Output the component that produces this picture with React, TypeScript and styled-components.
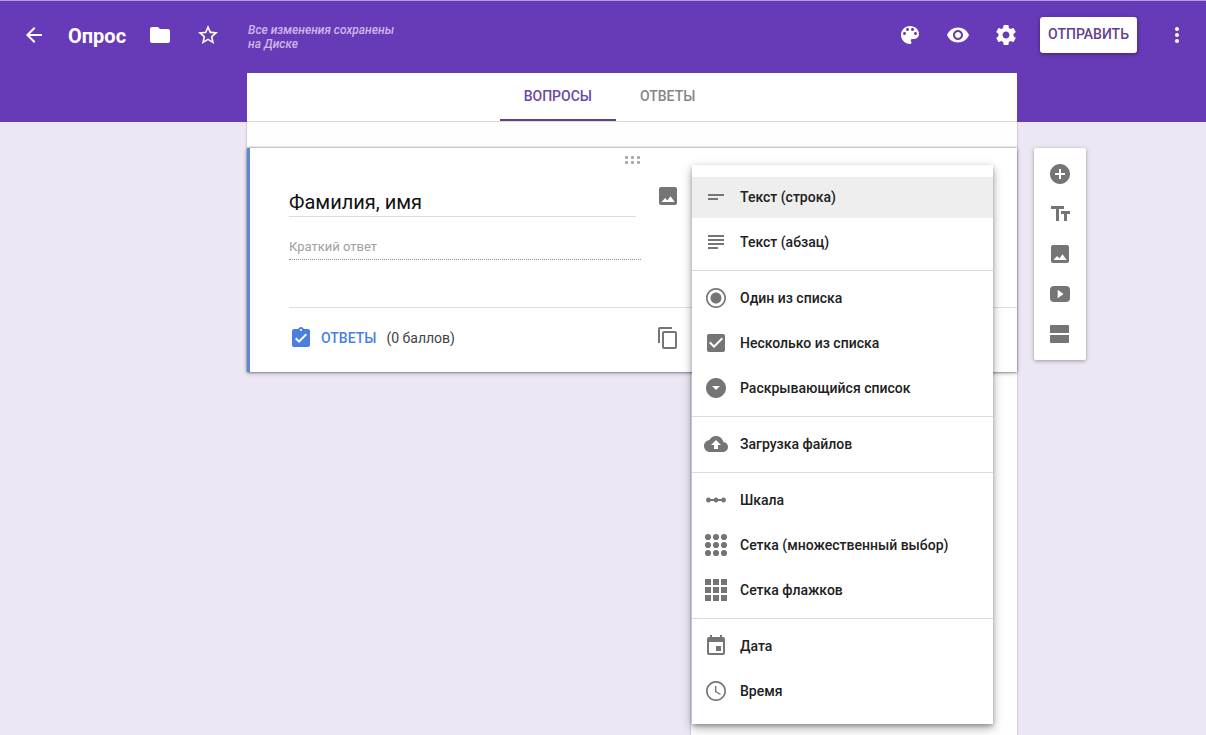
import React from "react";
import styled, { createGlobalStyle, css } from "styled-components";

const color = {
  purple: "#673ab7",
  purpleDark: "#5f4190",
  page: "#ede7f4",
  icon: "#757575",
  blue: "#4a7fe0",
  line: "#dcdcdc",
};

const GlobalStyle = createGlobalStyle`
  * { box-sizing: border-box; }
  body { margin: 0; background: ${color.page}; font-family: Roboto, "Noto Sans", sans-serif; }
  button, input { font-family: inherit; }
`;

const paths: Record<string, React.ReactNode> = {
  back: <path d="M20 11H7.83l5.59-5.59L12 4l-8 8 8 8 1.41-1.41L7.83 13H20v-2z" />,
  folder: <path d="M10 4H4c-1.1 0-1.99.9-1.99 2L2 18c0 1.1.9 2 2 2h16c1.1 0 2-.9 2-2V8c0-1.1-.9-2-2-2h-8l-2-2z" />,
  star: <path d="M22 9.24l-7.19-.62L12 2 9.19 8.63 2 9.24l5.46 4.73L5.82 21 12 17.27 18.18 21l-1.63-7.03L22 9.24zM12 15.4l-3.76 2.27 1-4.28-3.32-2.88 4.38-.38L12 6.1l1.71 4.04 4.38.38-3.32 2.88 1 4.28L12 15.4z" />,
  palette: <path d="M12 3c-4.97 0-9 4.03-9 9s4.03 9 9 9c.83 0 1.5-.67 1.5-1.5 0-.39-.15-.74-.39-1.01-.23-.26-.38-.61-.38-.99 0-.83.67-1.5 1.5-1.5H16c2.76 0 5-2.24 5-5 0-4.42-4.03-8-9-8zm-5.500 9c-.83 0-1.500-.67-1.500-1.500S5.670 9 6.500 9 8 9.670 8 10.500 7.330 12 6.500 12zm3-4C8.670 8 8 7.330 8 6.500S8.670 5 9.500 5s1.500.67 1.500 1.500S10.330 8 9.500 8zm5 0c-.83 0-1.500-.67-1.500-1.500S13.670 5 14.500 5s1.500.67 1.500 1.500S15.330 8 14.500 8zm3 4c-.83 0-1.500-.67-1.500-1.500S16.670 9 17.500 9s1.500.67 1.500 1.500-.67 1.500-1.500 1.500z" />,
  eye: <path d="M12 4.500C7 4.500 2.730 7.610 1 12c1.730 4.390 6 7.500 11 7.500s9.270-3.110 11-7.500c-1.730-4.390-6-7.500-11-7.500zM12 17c-2.760 0-5-2.240-5-5s2.240-5 5-5 5 2.240 5 5-2.240 5-5 5zm0-8c-1.660 0-3 1.340-3 3s1.340 3 3 3 3-1.340 3-3-1.340-3-3-3z" />,
  gear: <path d="M19.430 12.980c.04-.32.07-.64.07-.98s-.03-.66-.07-.98l2.110-1.650c.19-.15.24-.42.12-.64l-2-3.460c-.12-.22-.39-.3-.61-.22l-2.490 1c-.52-.4-1.080-.73-1.690-.98l-.38-2.650C14.460 2.180 14.250 2 14 2h-4c-.25 0-.46.18-.49.42l-.38 2.650c-.61.25-1.170.59-1.690.98l-2.490-1c-.23-.09-.49 0-.61.22l-2 3.460c-.13.22-.07.49.12.64l2.110 1.650c-.04.32-.07.65-.07.98s.03.66.07.98l-2.110 1.650c-.19.15-.24.42-.12.64l2 3.460c.12.22.39.3.61.22l2.490-1c.52.4 1.080.73 1.690.98l.38 2.650c.03.24.24.42.49.42h4c.25 0 .46-.18.49-.42l.38-2.650c.61-.25 1.170-.59 1.690-.98l2.490 1c.23.09.49 0 .61-.22l2-3.460c.12-.22.07-.49-.12-.64l-2.110-1.650zM12 15.500c-1.930 0-3.500-1.570-3.500-3.500s1.570-3.500 3.500-3.500 3.500 1.570 3.500 3.500-1.570 3.500-3.500 3.500z" />,
  more: <path d="M12 8c1.100 0 2-.9 2-2s-.9-2-2-2-2 .9-2 2 .9 2 2 2zm0 2c-1.100 0-2 .9-2 2s.9 2 2 2 2-.9 2-2-.9-2-2-2zm0 6c-1.100 0-2 .9-2 2s.9 2 2 2 2-.9 2-2-.9-2-2-2z" />,
  image: <path fillRule="evenodd" d="M5 3h14a2 2 0 0 1 2 2v14a2 2 0 0 1-2 2H5a2 2 0 0 1-2-2V5a2 2 0 0 1 2-2zM5.500 18h13.200l-4.200-5.700-3.100 4.100-2.300-2.500z" />,
  copy: <path d="M16 1H4c-1.100 0-2 .9-2 2v14h2V3h12V1zm3 4H8c-1.100 0-2 .9-2 2v14c0 1.100.9 2 2 2h11c1.100 0 2-.9 2-2V7c0-1.100-.9-2-2-2zm0 16H8V7h11v14z" />,
  clipboard: <path d="M19 3h-4.180C14.400 1.840 13.300 1 12 1c-1.300 0-2.400.84-2.820 2H5c-1.100 0-2 .9-2 2v14c0 1.100.9 2 2 2h14c1.100 0 2-.9 2-2V5c0-1.100-.9-2-2-2zm-7 0c.55 0 1 .45 1 1s-.45 1-1 1-1-.45-1-1 .45-1 1-1zm-2 14l-4-4 1.410-1.410L10 14.170l6.590-6.590L18 9l-8 8z" />,
  short: <path d="M4 9h16v2H4V9zm0 4h10v2H4v-2z" />,
  paragraph: <path d="M4 5h16v2H4V5zm0 4h16v2H4V9zm0 4h16v2H4v-2zm0 4h10v2H4v-2z" />,
  radio: <path d="M12 6.500c-3.040 0-5.500 2.460-5.500 5.500s2.460 5.500 5.500 5.500 5.500-2.460 5.500-5.500-2.460-5.500-5.500-5.500zM12 2C6.480 2 2 6.480 2 12s4.480 10 10 10 10-4.480 10-10S17.520 2 12 2zm0 18.300c-4.600 0-8.300-3.700-8.300-8.300S7.400 3.700 12 3.700s8.300 3.700 8.300 8.300-3.700 8.300-8.300 8.300z" />,
  check: <path d="M19 3H5c-1.110 0-2 .9-2 2v14c0 1.100.89 2 2 2h14c1.110 0 2-.9 2-2V5c0-1.100-.89-2-2-2zm-9 14l-5-5 1.410-1.410L10 14.170l7.590-7.590L19 8l-9 9z" />,
  dropdown: <path d="M12 2C6.480 2 2 6.480 2 12s4.480 10 10 10 10-4.480 10-10S17.520 2 12 2zm0 12l-4-4h8l-4 4z" />,
  upload: <path d="M19.350 10.040C18.670 6.590 15.640 4 12 4 9.110 4 6.600 5.640 5.350 8.040 2.340 8.360 0 10.910 0 14c0 3.310 2.690 6 6 6h13c2.760 0 5-2.240 5-5 0-2.640-2.050-4.780-4.650-4.960zM14 13v4h-4v-4H7l5-5 5 5h-3z" />,
  scale: <path d="M19.500 9.500c-1.030 0-1.900.62-2.290 1.500h-2.920c-.39-.88-1.260-1.500-2.290-1.500s-1.900.62-2.290 1.500H6.790c-.39-.88-1.260-1.500-2.290-1.500C3.120 9.500 2 10.620 2 12s1.120 2.500 2.500 2.500c1.030 0 1.900-.62 2.290-1.500h2.920c.39.88 1.260 1.500 2.290 1.500s1.900-.62 2.290-1.500h2.920c.39.88 1.260 1.500 2.290 1.500 1.380 0 2.500-1.120 2.500-2.500s-1.120-2.500-2.500-2.500z" />,
  dots: <>{[4, 12, 20].flatMap((y) => [4, 12, 20].map((x) => <circle key={`${x}-${y}`} cx={x} cy={y} r="3.100" />))}</>,
  squares: <>{[1, 9, 17].flatMap((y) => [1, 9, 17].map((x) => <rect key={`${x}-${y}`} x={x} y={y} width="6" height="6" />))}</>,
  date: <path d="M17 12h-5v5h5v-5zM16 1v2H8V1H6v2H5c-1.110 0-1.990.9-1.990 2L3 19c0 1.100.89 2 2 2h14c1.100 0 2-.9 2-2V5c0-1.100-.9-2-2-2h-1V1h-2zm3 18H5V8h14v11z" />,
  time: <path d="M11.990 2C6.470 2 2 6.480 2 12s4.470 10 9.990 10C17.520 22 22 17.520 22 12S17.520 2 11.990 2zM12 20.300c-4.600 0-8.300-3.700-8.300-8.300S7.400 3.700 12 3.700s8.300 3.700 8.300 8.300-3.700 8.300-8.300 8.300zM12.400 7H11v6l5.150 3.090.7-1.180-4.450-2.610z" />,
  add: <path d="M12 2C6.480 2 2 6.480 2 12s4.480 10 10 10 10-4.480 10-10S17.520 2 12 2zm5 11h-4v4h-2v-4H7v-2h4V7h2v4h4v2z" />,
  text: <path d="M3 4v3h5v12h3V7h5V4H3zm19 5h-9v3h3v7h3v-7h3V9z" />,
  video: <path fillRule="evenodd" d="M6 4h12a4 4 0 0 1 4 4v8a4 4 0 0 1-4 4H6a4 4 0 0 1-4-4V8a4 4 0 0 1 4-4zM9.700 7.800v8.400L15.500 12z" />,
  section: <path d="M3 3h17a1 1 0 0 1 1 1v7H2V4a1 1 0 0 1 1-1zM2 13h19v7a1 1 0 0 1-1 1H3a1 1 0 0 1-1-1z" />,
};

const Svg = styled.svg`
  display: block;
  flex: none;
  width: 24px;
  height: 24px;
  fill: currentColor;
`;

const Icon = ({ name }: { name: string }) => (
  <Svg viewBox="0 0 24 24" aria-hidden="true">{paths[name]}</Svg>
);

const columns = css`
  display: grid;
  grid-template-columns: minmax(24px, 247fr) minmax(0, 770px) minmax(72px, 189fr);
`;

const Page = styled.div`
  display: flex;
  flex-direction: column;
  min-height: 100vh;
`;

const Header = styled.header`
  background: ${color.purple};
  border-top: 1px solid #b39ddb;
`;

const Bar = styled.div`
  display: flex;
  align-items: center;
  height: 72px;
  padding: 0 5px 4px 10px;
  color: #fff;
`;

const IconButton = styled.button<{ $size?: number }>`
  display: flex;
  flex: none;
  align-items: center;
  justify-content: center;
  width: ${(p) => p.$size ?? 48}px;
  height: ${(p) => p.$size ?? 48}px;
  padding: 0;
  border: 0;
  background: none;
  color: inherit;
  cursor: pointer;
`;

const Title = styled.h1`
  margin: 2px 10px 0;
  font-size: 20px;
  line-height: 24px;
  font-weight: 700;
`;

const Saved = styled.p`
  flex: 0 1 160px;
  margin: 4px auto 0 16px;
  color: #ccb8ec;
  font-size: 12px;
  line-height: 14px;
  font-style: italic;
  font-weight: 500;
`;

const SendButton = styled.button`
  height: 36px;
  margin: 0 16px 0 10px;
  padding: 0 8px 2px;
  border: 0;
  border-radius: 3px;
  background: #fff;
  color: ${color.purpleDark};
  box-shadow: 0 1px 4px rgba(0, 0, 0, 0.4);
  font-size: 14px;
  font-weight: 500;
  cursor: pointer;
`;

const TabsRow = styled.div`
  ${columns}
`;

const Tabs = styled.nav`
  grid-column: 2;
  display: flex;
  justify-content: center;
  height: 49px;
  padding-right: 45px;
  background: #fff;
  border-bottom: 1px solid #dadada;
`;

const Tab = styled.button<{ $active?: boolean }>`
  padding: 0 24px;
  border: 0;
  border-bottom: 2px solid ${(p) => (p.$active ? color.purpleDark : "transparent")};
  background: none;
  color: ${(p) => (p.$active ? "#6a48a6" : "#868686")};
  font-size: 14px;
  font-weight: 500;
  cursor: pointer;
`;

const Main = styled.main`
  ${columns}
  flex: 1;
`;

const Form = styled.div`
  grid-column: 2;
  display: flex;
  flex-direction: column;
`;

const FormTop = styled.div`
  height: 26px;
  background: #fefefe;
  box-shadow: 0 0 2px rgba(0, 0, 0, 0.35);
  clip-path: inset(0 -3px);
`;

const FormRest = styled.div`
  flex: 1;
  align-self: flex-end;
  width: 326px;
  background: #fefefe;
  box-shadow: 0 0 2px rgba(0, 0, 0, 0.3);
`;

const Card = styled.section`
  position: relative;
  z-index: 1;
  padding: 8px 0 0 39px;
  border-left: 3px solid #5b88d8;
  background: #fff;
  box-shadow: 0 0 2px rgba(0, 0, 0, 0.5), 0 1px 4px rgba(0, 0, 0, 0.35);
`;

const Handle = styled.svg`
  display: block;
  width: 16px;
  height: 8px;
  margin: 0 auto 20px;
  fill: #a8a8a8;
  position: relative;
  left: -21px;
`;

const cardColumns = css`
  display: grid;
  grid-template-columns: minmax(0, 1fr) 24px 301px;
  column-gap: 12px;
  padding-right: 24px;
  color: ${color.icon};
`;

const Question = styled.div`
  ${cardColumns}
  align-items: start;
  row-gap: 17px;
  padding-bottom: 47px;
`;

const QuestionInput = styled.input`
  height: 33px;
  margin-right: 8px;
  padding: 4px 0 0;
  min-width: 0;
  border: 0;
  border-bottom: 1px solid ${color.line};
  outline: none;
  background: none;
  color: #111;
  font-size: 20px;
`;

const AnswerInput = styled.input`
  grid-column: 1;
  height: 26px;
  margin-right: 3px;
  padding: 0;
  min-width: 0;
  border: 0;
  border-bottom: 1px dotted #909090;
  outline: none;
  background: none;
  font-size: 13px;
  &::placeholder {
    color: #a0a0a0;
    opacity: 1;
    font-weight: 400;
  }
`;

const MenuAnchor = styled.div`
  position: relative;
`;

const Menu = styled.div`
  position: absolute;
  top: -19px;
  left: 0;
  width: 100%;
  padding: 12px 0;
  background: #fff;
  box-shadow: 0 2px 4px rgba(0, 0, 0, 0.25), 0 4px 10px rgba(0, 0, 0, 0.3);
`;

const MenuGroup = styled.div`
  display: flex;
  flex-direction: column;
  gap: 4px;
  & + & {
    margin-top: 7px;
    padding-top: 7px;
    border-top: 1px solid ${color.line};
  }
`;

const MenuItem = styled.button<{ $active?: boolean }>`
  display: flex;
  align-items: center;
  gap: 12px;
  height: 41px;
  padding: 0 12px 1px;
  border: 0;
  background: ${(p) => (p.$active ? "#eee" : "none")};
  color: ${color.icon};
  cursor: pointer;
`;

const MenuLabel = styled.span`
  color: #212121;
  font-size: 14px;
  line-height: 20px;
  font-weight: 500;
  white-space: nowrap;
`;

const CardFooter = styled.footer`
  ${cardColumns}
  padding-top: 18px;
  padding-bottom: 22px;
  border-top: 1px solid ${color.line};
`;

const Points = styled.div`
  display: flex;
  align-items: center;
  color: #424242;
  font-size: 14px;
`;

const AnswersButton = styled.button`
  display: flex;
  align-items: center;
  gap: 8px;
  margin-right: 10px;
  padding: 0;
  border: 0;
  background: none;
  color: ${color.blue};
  font-size: 14px;
  font-weight: 500;
  cursor: pointer;
`;

const Tools = styled.aside`
  grid-column: 3;
  align-self: start;
  justify-self: start;
  margin: 26px 0 0 17px;
  padding: 6px;
  border-radius: 2px;
  background: #fff;
  color: ${color.icon};
  box-shadow: 0 1px 4px rgba(0, 0, 0, 0.35);
`;

const menu = [
  [["short", "Текст (строка)"], ["paragraph", "Текст (абзац)"]],
  [["radio", "Один из списка"], ["check", "Несколько из списка"], ["dropdown", "Раскрывающийся список"]],
  [["upload", "Загрузка файлов"]],
  [["scale", "Шкала"], ["dots", "Сетка (множественный выбор)"], ["squares", "Сетка флажков"]],
  [["date", "Дата"], ["time", "Время"]],
];

const tools = [
  ["add", "Добавить вопрос"],
  ["text", "Добавить название"],
  ["image", "Добавить изображение"],
  ["video", "Добавить видео"],
  ["section", "Добавить раздел"],
];

export default function App() {
  return (
    <Page>
      <GlobalStyle />
      <Header>
        <Bar>
          <IconButton aria-label="Назад"><Icon name="back" /></IconButton>
          <Title>Опрос</Title>
          <IconButton aria-label="Папка"><Icon name="folder" /></IconButton>
          <IconButton aria-label="Пометить"><Icon name="star" /></IconButton>
          <Saved>Все изменения сохранены на Диске</Saved>
          <IconButton aria-label="Палитра"><Icon name="palette" /></IconButton>
          <IconButton aria-label="Просмотр"><Icon name="eye" /></IconButton>
          <IconButton aria-label="Настройки"><Icon name="gear" /></IconButton>
          <SendButton>ОТПРАВИТЬ</SendButton>
          <IconButton aria-label="Ещё"><Icon name="more" /></IconButton>
        </Bar>
        <TabsRow>
          <Tabs>
            <Tab $active>ВОПРОСЫ</Tab>
            <Tab>ОТВЕТЫ</Tab>
          </Tabs>
        </TabsRow>
      </Header>
      <Main>
        <Form>
          <FormTop />
          <Card>
            <Handle viewBox="0 0 16 8" aria-hidden="true">
              {[0, 5].flatMap((y) => [1, 7, 13].map((x) => (
                <rect key={`${x}-${y}`} x={x} y={y} width="3" height="3" rx="1" />
              )))}
            </Handle>
            <Question>
              <QuestionInput aria-label="Вопрос" defaultValue="Фамилия, имя" />
              <IconButton $size={24} aria-label="Добавить изображение к вопросу"><Icon name="image" /></IconButton>
              <MenuAnchor>
                <Menu role="listbox" aria-label="Тип вопроса">
                  {menu.map((group, g) => (
                    <MenuGroup key={g} role="group">
                      {group.map(([icon, label]) => (
                        <MenuItem key={label} role="option" aria-selected={icon === "short"} $active={icon === "short"}>
                          <Icon name={icon} />
                          <MenuLabel>{label}</MenuLabel>
                        </MenuItem>
                      ))}
                    </MenuGroup>
                  ))}
                </Menu>
              </MenuAnchor>
              <AnswerInput aria-label="Ответ" placeholder="Краткий ответ" readOnly />
            </Question>
            <CardFooter>
              <Points>
                <AnswersButton><Icon name="clipboard" />ОТВЕТЫ</AnswersButton>
                (0 баллов)
              </Points>
              <IconButton $size={24} aria-label="Копировать"><Icon name="copy" /></IconButton>
            </CardFooter>
          </Card>
          <FormRest />
        </Form>
        <Tools aria-label="Инструменты">
          {tools.map(([icon, label]) => (
            <IconButton key={icon} $size={40} aria-label={label}><Icon name={icon} /></IconButton>
          ))}
        </Tools>
      </Main>
    </Page>
  );
}
